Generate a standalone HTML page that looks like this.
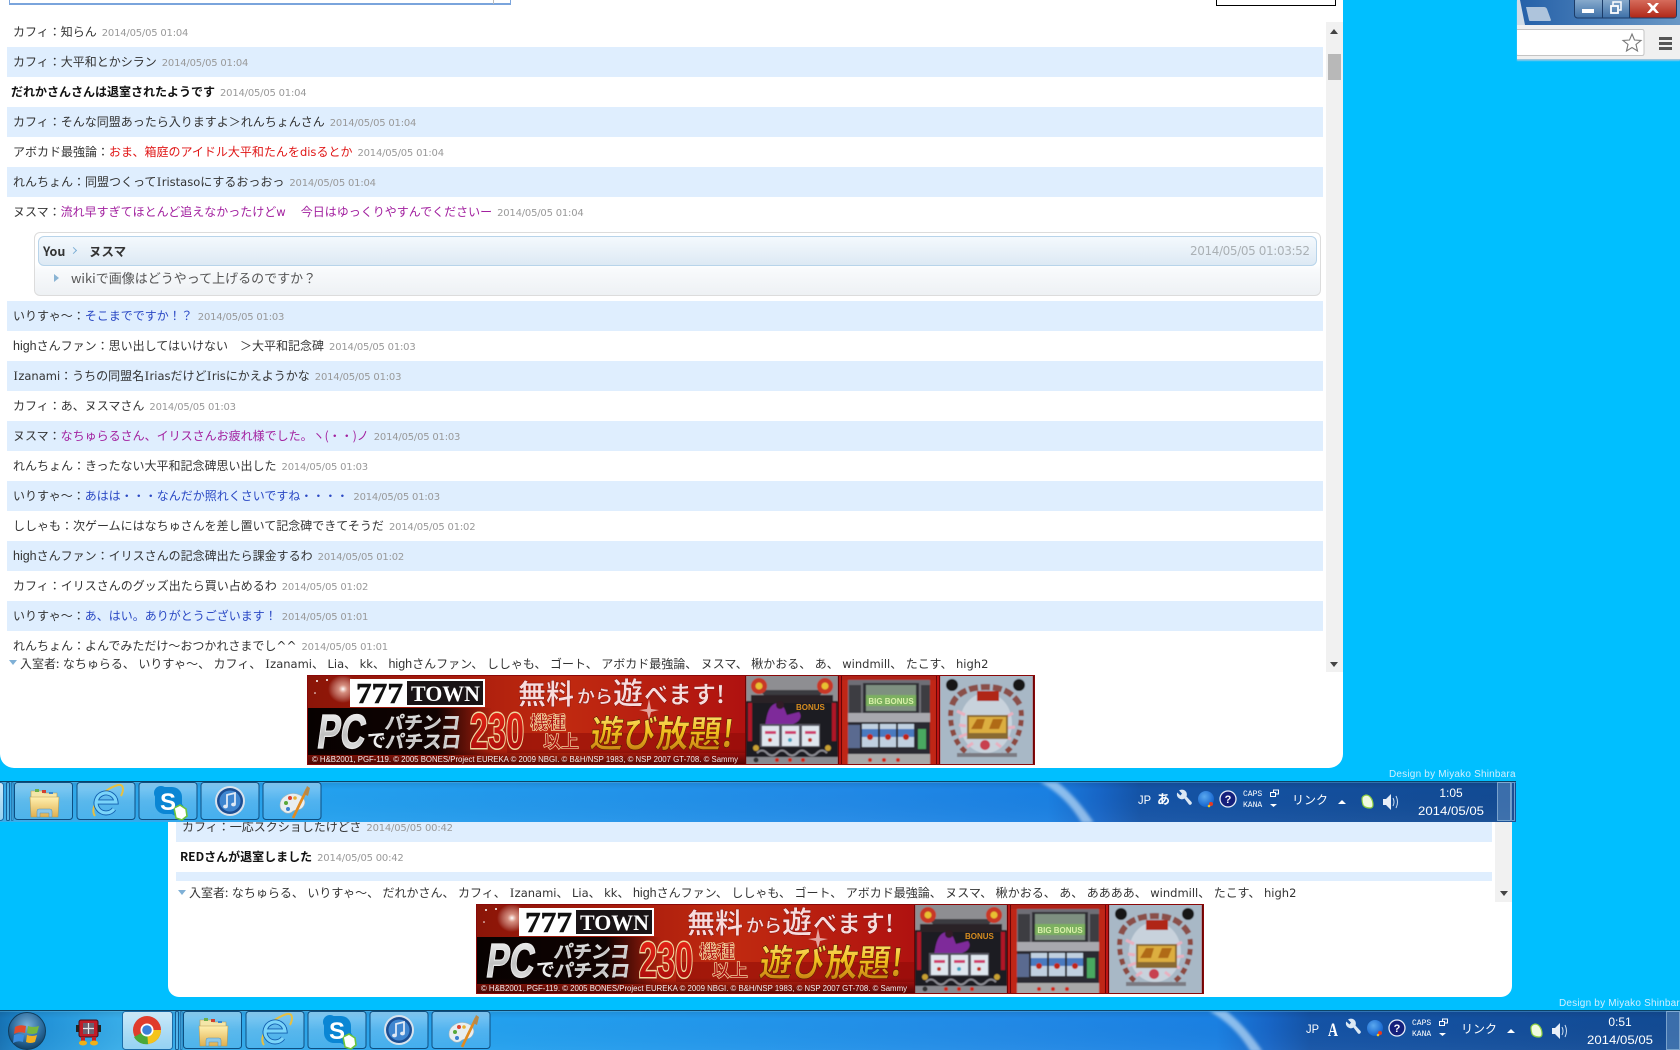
<!DOCTYPE html>
<html lang="ja"><head><meta charset="utf-8"><title>chat</title>
<style>
html,body{margin:0;padding:0;background:#00bfff;width:1680px;height:1050px;overflow:hidden}
body{position:relative;font-family:"Noto Sans CJK JP","Liberation Sans",sans-serif;color:#333}
.w{position:absolute;background:#fff}
.r{position:absolute;height:30px;line-height:30px;font-size:12px;white-space:nowrap;overflow:hidden;color:#333}
.a .r{left:7px;width:1310px;padding-left:6px}
.b .r{left:176px;width:1310px;padding-left:6px}
.o{background:#dfeefe}
.l{font-family:"DejaVu Sans",sans-serif;font-size:11.5px}
.h{font-family:"Liberation Sans",sans-serif;font-size:12.5px}
.i{font-family:"Liberation Serif",serif;font-size:13px;padding:0 .5px}
.c{font-family:"DejaVu Sans",sans-serif;font-size:12px}
.t{font-family:"DejaVu Sans",sans-serif;font-size:10px;letter-spacing:-.2px;color:#999;margin-left:5px}
.sys{font-weight:700;color:#111}
.red{color:#e01616}.pur{color:#a2209f}.blu{color:#2a48c4}
.sb{position:absolute;background:#f1f1f1;width:17px}
.up,.dn{position:absolute;width:0;height:0;border-left:4px solid transparent;border-right:4px solid transparent}
.up{border-bottom:5px solid #444}.dn{border-top:5px solid #444}
.info{position:absolute;height:20px;line-height:20px;font-size:12px;color:#333;white-space:nowrap;word-spacing:.8px}
.tri{position:absolute;width:0;height:0;border-left:4px solid transparent;border-right:4px solid transparent;border-top:5px solid #7fb0d6}
.d{position:absolute;font:10px "Liberation Sans",sans-serif;letter-spacing:.2px;color:#cfefff;white-space:nowrap;overflow:hidden;height:13px;line-height:13px}
svg{position:absolute;display:block;overflow:hidden}
</style></head><body>

<svg width="0" height="0" style="position:absolute">
<defs>
<linearGradient id="tbg" x1="0" x2="1" y1="0" y2="0">
<stop offset="0" stop-color="#1672b4"/><stop offset=".02" stop-color="#1f8fd6"/><stop offset=".07" stop-color="#37ace8"/><stop offset=".3" stop-color="#23a0ee"/><stop offset=".6" stop-color="#2189e6"/><stop offset=".72" stop-color="#1a80e2"/><stop offset=".751" stop-color="#1765c6"/><stop offset=".775" stop-color="#1453a6"/><stop offset="1" stop-color="#124a92"/>
</linearGradient>
<linearGradient id="tvg" x1="0" x2="0" y1="0" y2="1"><stop offset="0" stop-color="#000" stop-opacity=".1"/><stop offset=".2" stop-color="#000" stop-opacity="0"/><stop offset="1" stop-color="#fff" stop-opacity=".04"/></linearGradient>
<linearGradient id="btn" x1="0" x2="0" y1="0" y2="1"><stop offset="0" stop-color="#fff" stop-opacity=".42"/><stop offset=".5" stop-color="#fff" stop-opacity=".2"/><stop offset="1" stop-color="#fff" stop-opacity=".1"/></linearGradient>
<linearGradient id="btna" x1="0" x2="0" y1="0" y2="1"><stop offset="0" stop-color="#fff" stop-opacity=".75"/><stop offset="1" stop-color="#fff" stop-opacity=".45"/></linearGradient>
<linearGradient id="fold" x1="0" x2="0" y1="0" y2="1"><stop offset="0" stop-color="#fff0b0"/><stop offset="1" stop-color="#e0b050"/></linearGradient>
<radialGradient id="orb" cx=".5" cy=".35" r=".7"><stop offset="0" stop-color="#7ab0d8"/><stop offset=".6" stop-color="#2a6a9c"/><stop offset="1" stop-color="#0d3a5c"/></radialGradient>
<radialGradient id="tblue" cx=".4" cy=".35" r=".7"><stop offset="0" stop-color="#5aa8ee"/><stop offset="1" stop-color="#0f5fcc"/></radialGradient>
<linearGradient id="bred" x1="0" x2="1" y1="0" y2="0"><stop offset="0" stop-color="#8a1508"/><stop offset=".2" stop-color="#a81c0c"/><stop offset=".35" stop-color="#c02a10"/><stop offset=".6" stop-color="#b01210"/><stop offset="1" stop-color="#c81818"/></linearGradient>
<linearGradient id="bdark" x1="0" x2="1" y1="0" y2="0"><stop offset="0" stop-color="#000" stop-opacity=".95"/><stop offset=".7" stop-color="#000" stop-opacity=".9"/><stop offset="1" stop-color="#000" stop-opacity="0"/></linearGradient>
<linearGradient id="bbot" x1="0" x2="0" y1="0" y2="1"><stop offset="0" stop-color="#300" stop-opacity="0"/><stop offset="1" stop-color="#300" stop-opacity=".75"/></linearGradient>
<radialGradient id="spark"><stop offset="0" stop-color="#fff"/><stop offset=".3" stop-color="#ffd8c8" stop-opacity=".6"/><stop offset="1" stop-color="#fff" stop-opacity="0"/></radialGradient>
<linearGradient id="silver" x1="0" x2="0" y1="0" y2="1"><stop offset="0" stop-color="#fff"/><stop offset=".55" stop-color="#c0c0c0"/><stop offset="1" stop-color="#f4f4f4"/></linearGradient>
<linearGradient id="gold" x1="0" x2="0" y1="0" y2="1"><stop offset="0" stop-color="#fff2a0"/><stop offset=".5" stop-color="#f2c020"/><stop offset="1" stop-color="#b86a10"/></linearGradient>
<linearGradient id="rd" x1="0" x2="0" y1="0" y2="1"><stop offset="0" stop-color="#f02818"/><stop offset="1" stop-color="#a00808"/></linearGradient>
<filter id="soft" x="-5%" y="-5%" width="110%" height="110%"><feGaussianBlur stdDeviation=".6"/></filter>
<filter id="soft2" x="-30%" y="-10%" width="160%" height="120%"><feGaussianBlur stdDeviation="1.6"/></filter>

<g id="gfolder"><path d="M3 7h11l2 2h13v6H3z" fill="#f4e6a8" stroke="#b89a50" stroke-width=".6"/><rect x="7" y="5" width="4" height="3" fill="#6ab04a"/><rect x="14" y="6" width="4" height="3" fill="#d04030"/><rect x="21" y="8" width="4" height="2" fill="#3a88d0"/><path d="M2 13h29l-1 20H3z" fill="url(#fold)" stroke="#b89a50" stroke-width=".6"/><path d="M9 33v-6q0-2 2-2h11q2 0 2 2v6h-3v-4H12v4z" fill="#8ec8e8" stroke="#5a90b0" stroke-width=".5"/></g>
<g id="gie">
<path d="M5 34C-1 27 10 8 28 3c6-1 6 5 3 11" fill="none" stroke="#e8c040" stroke-width="2"/>
<path d="M7 20H26A10 10 0 1 0 24 27" fill="none" stroke="#1260b0" stroke-width="5"/>
<path d="M7 20H26A10 10 0 1 0 24 27" fill="none" stroke="#7ad4fa" stroke-width="3.200"/>
</g>
<g id="gsky"><rect x="2" y="3" width="27" height="27" rx="10" fill="#0a86d4"/><circle cx="8" cy="9" r="7" fill="#0a86d4"/><circle cx="24" cy="25" r="7" fill="#0a86d4"/><path d="M21 24l6-3 6 4 1 7-5 4-6-2z" fill="#fff" stroke="#6cc43c" stroke-width="1.600"/></g>
<g id="gitu"><circle cx="15" cy="15" r="15" fill="#d8e2ec"/><circle cx="15" cy="15" r="13" fill="#1b4d92"/><circle cx="15" cy="15" r="10.500" fill="#3f86d0"/><path d="M12 20V9l8-2v11" fill="none" stroke="#dfe9f5" stroke-width="1.800"/><ellipse cx="10.500" cy="20.500" rx="2.400" ry="1.900" fill="#dfe9f5"/><ellipse cx="18.500" cy="18.500" rx="2.400" ry="1.900" fill="#dfe9f5"/></g>
<g id="gpai"><path d="M3 22C3 14 12 9 20 11c7 2 10 8 6 13-3 4-7 2-10 4-3 3-7 3-10 0-2-1-3-3-3-6z" fill="#e8eef0" stroke="#a8b4b8" stroke-width=".6"/><circle cx="9" cy="20" r="2" fill="#58a838"/><circle cx="13" cy="15" r="2" fill="#e04030"/><circle cx="11" cy="26" r="2" fill="#3a80d0"/><circle cx="18" cy="15" r="1.800" fill="#e8b030"/><path d="M16 35L30 6" stroke="#e08a20" stroke-width="2.600"/><path d="M27 11l3-8 3 2-2 8z" fill="#b88848"/></g>
<g id="gbar">
<rect width="1690" height="41" fill="url(#tbg)"/><rect width="1690" height="41" fill="url(#tvg)"/>
<path d="M1209 1q26 14 42 41h12Q1244 14 1226 1z" fill="#d8ecfb" opacity=".6" filter="url(#soft2)"/>
<rect width="1690" height="1" fill="#0a4468"/><rect y="1" width="1690" height="1" fill="#6cc4ee" opacity=".35"/>
<circle cx="27" cy="21" r="18.500" fill="url(#orb)" stroke="#103c5c"/>
<path d="M15 17q5-3 11-1l-1 7q-6-2-11 1z" fill="#e24a2c"/><path d="M28 16q5 2 11 0l-2 7q-5 2-10 0z" fill="#78b83c"/><path d="M14 25q5-2 10 0l-1 7q-5-2-10 1z" fill="#3a8ce0"/><path d="M27 25q5 2 10 0l-2 7q-5 2-9 0z" fill="#f2b020"/>
<rect x="79" y="10" width="19" height="17" rx="2" fill="#c01c28" stroke="#401018"/><rect x="83" y="13" width="11" height="11" fill="#6a6070"/><path d="M88.500 13v11M83 18.500h11" stroke="#e8e4e8" stroke-width="1.200"/><rect x="76" y="15" width="3" height="7" fill="#222"/><rect x="98" y="15" width="3" height="7" fill="#222"/><rect x="81" y="27" width="4" height="5" fill="#c02028"/><rect x="92" y="27" width="4" height="5" fill="#c02028"/><ellipse cx="83" cy="33" rx="4" ry="2.500" fill="#f0b018"/><ellipse cx="94" cy="33" rx="4" ry="2.500" fill="#f0b018"/>
<rect x="122.500" y="1.500" width="50" height="38" rx="3" fill="url(#btna)" stroke="#1c6ca8"/>
<circle cx="147" cy="20" r="14" fill="#e03c2c"/><path d="M147 20L134 27a14 14 0 0 0 15 7z" fill="#4aa838"/><path d="M147 20h14a14 14 0 0 1-13 14z" fill="#f4c41c"/><circle cx="147" cy="20" r="6.500" fill="#fff"/><circle cx="147" cy="20" r="4.800" fill="#3a80d8"/>
<rect x="175.500" y="1.500" width="3" height="38" rx="1" fill="#fff" fill-opacity=".15" stroke="#145c94"/><rect x="180.500" y="1.500" width="1.500" height="38" fill="#fff" fill-opacity=".15" stroke="#145c94" stroke-width=".6"/>
<g fill="url(#btn)" stroke="#0e4f82"><rect x="183.500" y="1.500" width="58" height="37" rx="3"/><rect x="246" y="1.500" width="58" height="37" rx="3"/><rect x="308" y="1.500" width="58" height="37" rx="3"/><rect x="370" y="1.500" width="58" height="37" rx="3"/><rect x="432" y="1.500" width="58" height="37" rx="3"/></g>
<use href="#gfolder" x="197" y="3"/><use href="#gie" x="259" y="1"/><use href="#gsky" x="322" y="3"/><use href="#gitu" x="384" y="5"/><use href="#gpai" x="446" y="2"/>
<path d="M1348 9.500L1351 12.500L1349.500 14.500L1346.200 11.500A5 5 0 0 0 1353.500 17.500L1358 23.500A1.800 1.800 0 0 0 1360.500 21L1355.500 15.500A5 5 0 0 0 1348 9.500Z" fill="#dbe8f4"/>
<circle cx="1375" cy="18" r="8" fill="url(#tblue)"/><circle cx="1380" cy="23" r="2" fill="#e83820"/><circle cx="1378" cy="25" r="1.300" fill="#f2c820"/>
<circle cx="1397" cy="18" r="8" fill="#14207c" stroke="#e8eef8" stroke-width="1.300"/>
<path d="M1439.500 15.500v-4h5v4zM1442.500 11.500v-2.500h5v4h-3" fill="none" stroke="#fff" stroke-width="1"/>
<path d="M1439 23h7l-3.500 3z" fill="#fff"/><path d="M1507 23h8l-4-4z" fill="#fff"/>
<path d="M1531 18q0-3 4-4 3 0 5 3 2 3 2 7 0 3-3 3-5 0-7-3-1-3-1-6z" fill="#f0fbe0" stroke="#8ed040" stroke-width="1.200"/>
<path d="M1552 18h3l5-5v16l-5-5h-3z" fill="#e8eff8"/><path d="M1562 17q2 4 0 8M1565 15q3 6 0 12" fill="none" stroke="#cfe0f2" stroke-width="1"/>
<rect x="1666.500" y="1.500" width="13" height="38" fill="#5d8cc0" fill-opacity=".55" stroke="#9cc0e0" stroke-opacity=".7"/><rect x="1680.500" y="1.500" width="3" height="38" fill="#1a4e94" stroke="#6c9ccc"/>
</g>

<g id="gban">
<rect width="728" height="90" fill="url(#bred)"/>
<rect x="0" y="33" width="185" height="47" fill="url(#bdark)"/>
<rect x="200" y="58" width="240" height="20" fill="#8a0a06" opacity=".5"/>
<rect y="74" width="440" height="16" fill="url(#bbot)"/>
<ellipse cx="36" cy="14" rx="15" ry="14" fill="url(#spark)"/>
<circle cx="10" cy="6" r="1" fill="#fff"/><circle cx="20" cy="5" r="1" fill="#fff"/><circle cx="8" cy="18" r=".8" fill="#fff"/>
<path d="M340 34l2-10 2 10 8 1-8 2-2 8-2-8-8-2z" fill="#fff" opacity=".6"/>
<g filter="url(#soft)">
<rect x="439" width="92" height="90" fill="#1e1a22"/>
<path d="M439 0h92v26H439z" fill="#8e8e92"/><path d="M452 15h66l-8 8h-50z" fill="#3a3a40"/>
<rect x="444" y="20" width="82" height="8" fill="#2a2228"/>
<circle cx="452" cy="11" r="8" fill="#c83828"/><circle cx="452" cy="11" r="3.500" fill="#e8c030"/><circle cx="518" cy="11" r="8" fill="#c83828"/><circle cx="518" cy="11" r="3.500" fill="#e8c030"/>
<rect x="441" y="28" width="4" height="38" fill="#b01828"/><rect x="525" y="28" width="4" height="38" fill="#b01828"/>
<path d="M458 52c2-14 4-22 12-24 8 2 8 8 10 12l12-3c4 5 0 10-6 12h-14z" fill="#7e2a9a"/><circle cx="473" cy="30" r="4" fill="#301c28"/>
<rect x="453" y="49" width="60" height="23" fill="#555560"/>
<rect x="455" y="51" width="17" height="20" fill="#dfe6ee"/><rect x="475" y="51" width="17" height="20" fill="#dfe6ee"/><rect x="495" y="51" width="17" height="20" fill="#dfe6ee"/>
<rect x="458" y="56" width="11" height="3" fill="#d04070"/><rect x="478" y="56" width="11" height="3" fill="#d04070"/><rect x="498" y="56" width="11" height="3" fill="#d04070"/>
<circle cx="463" cy="65" r="2" fill="#c03020"/><circle cx="483" cy="65" r="2" fill="#40a0c0"/><circle cx="503" cy="65" r="2" fill="#c03020"/>
<path d="M450 78q5-5 10 0t10 0 10 0 10 0 10 0 10 0 10 0" fill="none" stroke="#888890" stroke-width="2"/>
<circle cx="449" cy="73" r="3" fill="#c8a030"/><circle cx="521" cy="73" r="3" fill="#c8a030"/>
<rect x="439" y="82" width="92" height="8" fill="#8a8a90"/><circle cx="470" cy="85" r="2" fill="#d02818"/><circle cx="483" cy="85" r="2" fill="#d02818"/><circle cx="496" cy="85" r="2" fill="#d02818"/><circle cx="449" cy="85" r="2.500" fill="#333"/>
<rect x="535" width="94" height="90" fill="#6e6e76"/>
<rect x="535" width="6" height="90" fill="#c02818"/><rect x="623" width="6" height="90" fill="#c02818"/><rect x="535" width="94" height="5" fill="#b02018"/>
<rect x="556" y="8" width="56" height="30" fill="#2e2e34"/><rect x="559" y="10" width="50" height="26" fill="#7e9080"/><rect x="559" y="20" width="50" height="11" fill="#7cb060"/>
<rect x="542" y="10" width="12" height="28" fill="#3c3c42"/><rect x="614" y="10" width="9" height="28" fill="#3c3c42"/>
<rect x="541" y="38" width="82" height="9" fill="#a8a8ae"/>
<rect x="541" y="47" width="82" height="32" fill="#2a2a30"/>
<rect x="541" y="50" width="12" height="23" fill="#5a6a90"/>
<rect x="555" y="49" width="16" height="23" fill="#c0d0e0"/><rect x="573" y="49" width="16" height="23" fill="#c0d0e0"/><rect x="591" y="49" width="16" height="23" fill="#c0d0e0"/>
<rect x="555" y="54" width="16" height="8" fill="#4a7ac0"/><rect x="573" y="54" width="16" height="8" fill="#4a7ac0"/><rect x="591" y="54" width="16" height="8" fill="#4a7ac0"/>
<circle cx="563" cy="62" r="3" fill="#c02818"/><circle cx="581" cy="62" r="3" fill="#c02818"/><circle cx="599" cy="62" r="3" fill="#c02818"/>
<rect x="611" y="54" width="8" height="20" fill="#4aa860"/>
<rect x="541" y="79" width="82" height="11" fill="#a8a8a8"/><circle cx="563" cy="85" r="2" fill="#d02818"/><circle cx="577" cy="85" r="2" fill="#d02818"/><circle cx="591" cy="85" r="2" fill="#d02818"/>
<rect x="633" width="93" height="90" fill="#a8b8c6"/>
<circle cx="645" cy="10" r="6" fill="#181818"/><circle cx="712" cy="10" r="6" fill="#181818"/>
<path d="M645 30c5-14 20-18 34-18s26 4 34 18" fill="none" stroke="#8a5048" stroke-width="6" stroke-dasharray="9 3"/>
<path d="M644 35c-2 16 4 36 18 44M714 35c2 16-4 36-18 44" fill="none" stroke="#8c4a40" stroke-width="5" stroke-dasharray="6 4"/>
<ellipse cx="679" cy="48" rx="26" ry="30" fill="#c8d2dc"/>
<path d="M650 36l8 4M652 50l7 1M652 62l8-3M706 38l-7 4M708 52l-8 1M704 64l-8-3M660 72l6-4M694 72l-5-4" stroke="#e8b0c0" stroke-width="3"/>
<rect x="670" y="16" width="22" height="10" fill="#b02818"/>
<rect x="660" y="40" width="41" height="24" fill="#8a6a30"/><rect x="662" y="42" width="37" height="16" fill="#dcae40"/><path d="M664 54l6-10h8l-3 10zM682 54l4-10h10l-4 10z" fill="#b06a18"/>
<circle cx="678" cy="70" r="5" fill="#c84050"/>
<rect x="650" y="78" width="60" height="4" fill="#7a7a82"/>
</g>
<rect x="438.500" y=".5" width="93" height="89" fill="none" stroke="#6a0606"/><rect x="534.500" y=".5" width="95" height="89" fill="none" stroke="#6a0606"/><rect x="632.500" y=".5" width="94" height="89" fill="none" stroke="#6a0606"/>
<rect x=".5" y=".5" width="727" height="89" fill="none" stroke="#8a0808"/>
<rect x="43" y="4" width="135" height="28" fill="#fff"/><rect x="100" y="6" width="76" height="24" fill="#1a1416"/>
</g>
</defs>
</svg>

<div class="w b" style="left:168px;top:822px;width:1344px;height:175px;border-radius:0 0 11px 11px"></div>
<div class="b" style="position:absolute;left:0;top:0">
<div class="r o" style="top:812px">カフィ&#xFF1A;一応スクショしたけどさ<span class="t">2014/05/05 00:42</span></div>
<div class="r" style="top:842px;left:174px"><span class="sys">REDさんが退室しました</span><span class="t">2014/05/05 00:42</span></div>
<div class="r o" style="top:872px;height:9px"></div>
</div>
<div class="sb" style="left:1495px;top:822px;height:80px"></div>
<div class="dn" style="left:1500px;top:891px"></div>
<div class="tri" style="left:178px;top:890px"></div>
<div class="info" style="left:189px;top:883px">入室者: なちゅらる、 いりすゃ&#xFF5E;、 だれかさん、 カフィ、 <span class="l"><span class="i">I</span>zanami</span>、 <span class="l">Lia</span>、 <span class="l">kk</span>、 <span class="h">high</span>さんファン、 ししゃも、 ゴート、 アボカド最強論、 ヌスマ、 楸かおる、 あ、 ああああ、 <span class="l">windmill</span>、 たこす、 <span class="l">high2</span></div>

<svg style="left:476px;top:904px" width="728" height="90" viewBox="0 0 728 90">
<use href="#gban"/>
<text x="49" y="28" font-family="Liberation Serif" font-weight="700" font-size="28" fill="#111" stroke="#111" stroke-width=".5" textLength="47" lengthAdjust="spacingAndGlyphs">777</text>
<text x="104" y="26" font-family="Liberation Serif" font-weight="700" font-size="22" fill="#fff" textLength="69" lengthAdjust="spacingAndGlyphs">TOWN</text>
<g transform="skewX(-8)"><text x="19" y="73" font-family="Liberation Sans" font-weight="700" font-size="48" fill="url(#silver)" stroke="#e8e8e8" stroke-width="1.200" textLength="48" lengthAdjust="spacingAndGlyphs">PC</text></g>
<text x="60" y="72" font-family="Noto Sans CJK JP" font-weight="700" font-size="19" fill="#eee">で</text>
<g transform="skewX(-8)"><text x="85" y="54" font-family="Noto Sans CJK JP" font-weight="700" font-size="18" fill="url(#silver)" stroke="#ddd" stroke-width=".4" textLength="75" lengthAdjust="spacingAndGlyphs">パチンコ</text>
<text x="88" y="73" font-family="Noto Sans CJK JP" font-weight="700" font-size="18" fill="url(#silver)" stroke="#ddd" stroke-width=".4" textLength="75" lengthAdjust="spacingAndGlyphs">パチスロ</text></g>
<text x="163" y="73" font-family="Liberation Sans" font-weight="700" font-size="50" fill="url(#rd)" stroke="#f0d8a0" stroke-width="3" paint-order="stroke" textLength="54" lengthAdjust="spacingAndGlyphs">230</text>
<text x="223" y="54" font-family="Noto Sans CJK JP" font-weight="700" font-size="18" fill="#b01010" stroke="#f2d8a0" stroke-width=".7">機種</text>
<text x="236" y="73" font-family="Noto Sans CJK JP" font-weight="700" font-size="18" fill="#b01010" stroke="#f2d8a0" stroke-width=".7">以上</text>
<g transform="skewX(-6)"><text x="290" y="72" font-family="Noto Sans CJK JP" font-weight="700" font-size="37" fill="url(#gold)" stroke="#5a1c00" stroke-width=".6" textLength="143" lengthAdjust="spacingAndGlyphs">遊び放題!</text></g>
<g font-family="Noto Sans CJK JP" font-weight="700" fill="#f8dcdc" stroke="#700" stroke-width=".4">
<text x="211" y="29" font-size="28">無料</text><text x="270" y="28" font-size="18">から</text><text x="306" y="29" font-size="30">遊</text><text x="337" y="28" font-size="24">べます</text><text x="409" y="28" font-size="24">!</text></g>
<text x="5" y="87" font-family="Liberation Sans" font-size="8" fill="#f4f0f0" textLength="426" lengthAdjust="spacingAndGlyphs">© H&amp;B2001, PGF-119. © 2005 BONES/Project EUREKA © 2009 NBGI. © B&amp;H/NSP 1983, © NSP 2007 GT-708. © Sammy</text>
<text x="489" y="35" font-family="Liberation Sans" font-weight="700" font-size="8" fill="#d88c20">BONUS</text>
<text x="584" y="29" text-anchor="middle" font-family="Liberation Sans" font-weight="700" font-size="8" fill="#d8f0a8">BIG BONUS</text>
</svg>

<div class="d" style="left:1559px;top:997px;width:121px">Design by Miyako Shinbara</div>

<svg style="left:0;top:1010px" width="1680" height="40" viewBox="0 0 1680 40">
<use href="#gbar"/>
<g fill="#fff">
<text x="329" y="29" font-family="Liberation Sans" font-weight="700" font-size="24">S</text>
<text x="1306" y="23" font-family="Liberation Sans" font-size="12" textLength="13" lengthAdjust="spacingAndGlyphs">JP</text>
<text x="1328" y="26" font-family="Liberation Serif" font-weight="700" font-size="19" textLength="10" lengthAdjust="spacingAndGlyphs">A</text>
<text x="1397" y="22" font-family="Liberation Sans" font-weight="700" font-size="11" text-anchor="middle">?</text>
<text x="1412" y="15" font-family="Liberation Mono" font-size="8">CAPS</text>
<text x="1412" y="26" font-family="Liberation Mono" font-size="8">KANA</text>
<text x="1461" y="23" font-family="Noto Sans CJK JP" font-size="12">リンク</text>
<text x="1620" y="16" font-family="Liberation Sans" font-size="12" text-anchor="middle">0:51</text>
<text x="1587" y="34" font-family="Liberation Sans" font-size="12" textLength="66" lengthAdjust="spacingAndGlyphs">2014/05/05</text>
</g>
</svg>

<div class="w a" style="left:0;top:0;width:1343px;height:768px;border-radius:0 0 14px 14px"></div>
<div style="position:absolute;left:9px;top:-3px;width:500px;height:6px;border:1px solid #7aa4dc;border-width:0 1px 2px 1px"></div>
<div style="position:absolute;left:493px;top:0;width:1px;height:4px;background:#bbb"></div>
<div style="position:absolute;left:1216px;top:-6px;width:118px;height:10px;border:1px solid #000;background:#fff"></div>

<div class="a">
<div class="r" style="top:17px">カフィ&#xFF1A;知らん<span class="t">2014/05/05 01:04</span></div>
<div class="r o" style="top:47px">カフィ&#xFF1A;大平和とかシラン<span class="t">2014/05/05 01:04</span></div>
<div class="r" style="top:77px;padding-left:4px"><span class="sys">だれかさんさんは退室されたようです</span><span class="t">2014/05/05 01:04</span></div>
<div class="r o" style="top:107px">カフィ&#xFF1A;そんな同盟あったら入りますよ&#xFF1E;れんちょんさん<span class="t">2014/05/05 01:04</span></div>
<div class="r" style="top:137px">アボカド最強論&#xFF1A;<span class="red">おま、箱庭のアイドル大平和たんを<span class="l">dis</span>るとか</span><span class="t">2014/05/05 01:04</span></div>
<div class="r o" style="top:167px">れんちょん&#xFF1A;同盟つくって<span class="l"><span class="i">I</span>ristaso</span>にするおっおっ<span class="t">2014/05/05 01:04</span></div>
<div class="r" style="top:197px">ヌスマ&#xFF1A;<span class="pur">流れ早すぎてほとんど追えなかったけど<span class="l" style="padding-right:3px">w</span>&#x3000;今日はゆっくりやすんでくださいー</span><span class="t">2014/05/05 01:04</span></div>

<div style="position:absolute;left:34px;top:232px;width:1285px;height:62px;border:1px solid #dcdcdc;border-radius:6px;background:linear-gradient(#fff 50%,#f8fafc 60%,#eef1f4)"></div>
<div style="position:absolute;left:38px;top:236px;width:1277px;height:28px;border:1px solid #b8d4ea;border-radius:6px;background:linear-gradient(#f4f9fd,#dde9f4)"></div>
<div style="position:absolute;left:43px;top:241px;font-size:12.500px;font-weight:700;line-height:20px;color:#333">You</div>
<div style="position:absolute;left:71px;top:248px;width:4px;height:4px;border:solid #7fb0d6;border-width:1.500px 1.500px 0 0;transform:rotate(45deg)"></div>
<div style="position:absolute;left:89px;top:241px;font-size:12.500px;font-weight:700;line-height:20px;color:#333">ヌスマ</div>
<div style="position:absolute;left:1190px;top:241px;font:12px/20px 'DejaVu Sans',sans-serif;letter-spacing:-.38px;color:#aab0b4;white-space:nowrap">2014/05/05 01:03:52</div>
<div style="position:absolute;left:54px;top:274px;width:0;height:0;border-top:4px solid transparent;border-bottom:4px solid transparent;border-left:5px solid #8ab4d4"></div>
<div style="position:absolute;left:71px;top:268px;font-size:13px;line-height:20px;color:#555;white-space:nowrap">wikiで画像はどうやって上げるのですか&#xFF1F;</div>

<div class="r o" style="top:301px">いりすゃ&#xFF5E;&#xFF1A;<span class="blu">そこまでですか&#xFF01;&#xFF1F;</span><span class="t">2014/05/05 01:03</span></div>
<div class="r" style="top:331px"><span class="h">high</span>さんファン&#xFF1A;思い出してはいけない&#x3000;&#xFF1E;大平和記念碑<span class="t">2014/05/05 01:03</span></div>
<div class="r o" style="top:361px"><span class="l"><span class="i">I</span>zanami</span>&#xFF1A;うちの同盟名<span class="l"><span class="i">I</span>rias</span>だけど<span class="l"><span class="i">I</span>ris</span>にかえようかな<span class="t">2014/05/05 01:03</span></div>
<div class="r" style="top:391px">カフィ&#xFF1A;あ、ヌスマさん<span class="t">2014/05/05 01:03</span></div>
<div class="r o" style="top:421px">ヌスマ&#xFF1A;<span class="pur">なちゅらるさん、イリスさんお疲れ様でした。ヽ(・・)ノ</span><span class="t">2014/05/05 01:03</span></div>
<div class="r" style="top:451px">れんちょん&#xFF1A;きったない大平和記念碑思い出した<span class="t">2014/05/05 01:03</span></div>
<div class="r o" style="top:481px">いりすゃ&#xFF5E;&#xFF1A;<span class="blu">あはは・・・なんだか照れくさいですね・・・・</span><span class="t">2014/05/05 01:03</span></div>
<div class="r" style="top:511px">ししゃも&#xFF1A;次ゲームにはなちゅさんを差し置いて記念碑できてそうだ<span class="t">2014/05/05 01:02</span></div>
<div class="r o" style="top:541px"><span class="h">high</span>さんファン&#xFF1A;イリスさんの記念碑出たら課金するわ<span class="t">2014/05/05 01:02</span></div>
<div class="r" style="top:571px">カフィ&#xFF1A;イリスさんのグッズ出たら買い占めるわ<span class="t">2014/05/05 01:02</span></div>
<div class="r o" style="top:601px">いりすゃ&#xFF5E;&#xFF1A;<span class="blu">あ、はい。ありがとうございます&#xFF01;</span><span class="t">2014/05/05 01:01</span></div>
<div class="r" style="top:631px">れんちょん&#xFF1A;よんでみただけ&#xFF5E;おつかれさまでし<span class="c">^^</span><span class="t">2014/05/05 01:01</span></div>
</div>

<div class="sb" style="left:1326px;top:22px;height:650px"></div>
<div class="up" style="left:1330px;top:29px"></div>
<div style="position:absolute;left:1328px;top:54px;width:13px;height:26px;background:#b8b8b8"></div>
<div class="dn" style="left:1330px;top:662px"></div>
<div class="tri" style="left:9px;top:660px"></div>
<div class="info" style="left:20px;top:654px">入室者: なちゅらる、 いりすゃ&#xFF5E;、 カフィ、 <span class="l"><span class="i">I</span>zanami</span>、 <span class="l">Lia</span>、 <span class="l">kk</span>、 <span class="h">high</span>さんファン、 ししゃも、 ゴート、 アボカド最強論、 ヌスマ、 楸かおる、 あ、 <span class="l">windmill</span>、 たこす、 <span class="l">high2</span></div>

<svg style="left:307px;top:675px" width="728" height="90" viewBox="0 0 728 90">
<use href="#gban"/>
<text x="49" y="28" font-family="Liberation Serif" font-weight="700" font-size="28" fill="#111" stroke="#111" stroke-width=".5" textLength="47" lengthAdjust="spacingAndGlyphs">777</text>
<text x="104" y="26" font-family="Liberation Serif" font-weight="700" font-size="22" fill="#fff" textLength="69" lengthAdjust="spacingAndGlyphs">TOWN</text>
<g transform="skewX(-8)"><text x="19" y="73" font-family="Liberation Sans" font-weight="700" font-size="48" fill="url(#silver)" stroke="#e8e8e8" stroke-width="1.200" textLength="48" lengthAdjust="spacingAndGlyphs">PC</text></g>
<text x="60" y="72" font-family="Noto Sans CJK JP" font-weight="700" font-size="19" fill="#eee">で</text>
<g transform="skewX(-8)"><text x="85" y="54" font-family="Noto Sans CJK JP" font-weight="700" font-size="18" fill="url(#silver)" stroke="#ddd" stroke-width=".4" textLength="75" lengthAdjust="spacingAndGlyphs">パチンコ</text>
<text x="88" y="73" font-family="Noto Sans CJK JP" font-weight="700" font-size="18" fill="url(#silver)" stroke="#ddd" stroke-width=".4" textLength="75" lengthAdjust="spacingAndGlyphs">パチスロ</text></g>
<text x="163" y="73" font-family="Liberation Sans" font-weight="700" font-size="50" fill="url(#rd)" stroke="#f0d8a0" stroke-width="3" paint-order="stroke" textLength="54" lengthAdjust="spacingAndGlyphs">230</text>
<text x="223" y="54" font-family="Noto Sans CJK JP" font-weight="700" font-size="18" fill="#b01010" stroke="#f2d8a0" stroke-width=".7">機種</text>
<text x="236" y="73" font-family="Noto Sans CJK JP" font-weight="700" font-size="18" fill="#b01010" stroke="#f2d8a0" stroke-width=".7">以上</text>
<g transform="skewX(-6)"><text x="290" y="72" font-family="Noto Sans CJK JP" font-weight="700" font-size="37" fill="url(#gold)" stroke="#5a1c00" stroke-width=".6" textLength="143" lengthAdjust="spacingAndGlyphs">遊び放題!</text></g>
<g font-family="Noto Sans CJK JP" font-weight="700" fill="#f8dcdc" stroke="#700" stroke-width=".4">
<text x="211" y="29" font-size="28">無料</text><text x="270" y="28" font-size="18">から</text><text x="306" y="29" font-size="30">遊</text><text x="337" y="28" font-size="24">べます</text><text x="409" y="28" font-size="24">!</text></g>
<text x="5" y="87" font-family="Liberation Sans" font-size="8" fill="#f4f0f0" textLength="426" lengthAdjust="spacingAndGlyphs">© H&amp;B2001, PGF-119. © 2005 BONES/Project EUREKA © 2009 NBGI. © B&amp;H/NSP 1983, © NSP 2007 GT-708. © Sammy</text>
<text x="489" y="35" font-family="Liberation Sans" font-weight="700" font-size="8" fill="#d88c20">BONUS</text>
<text x="584" y="29" text-anchor="middle" font-family="Liberation Sans" font-weight="700" font-size="8" fill="#d8f0a8">BIG BONUS</text>
</svg>

<div class="d" style="left:1389px;top:768px;width:127px">Design by Miyako Shinbara</div>

<svg style="left:0;top:781px" width="1516" height="41" viewBox="169 0 1516 41">
<use href="#gbar"/>
<g fill="#fff">
<text x="329" y="29" font-family="Liberation Sans" font-weight="700" font-size="24">S</text>
<text x="1307" y="23" font-family="Liberation Sans" font-size="12" textLength="13" lengthAdjust="spacingAndGlyphs">JP</text>
<text x="1326" y="23" font-family="Noto Sans CJK JP" font-weight="700" font-size="13">あ</text>
<text x="1397" y="22" font-family="Liberation Sans" font-weight="700" font-size="11" text-anchor="middle">?</text>
<text x="1412" y="15" font-family="Liberation Mono" font-size="8">CAPS</text>
<text x="1412" y="26" font-family="Liberation Mono" font-size="8">KANA</text>
<text x="1461" y="23" font-family="Noto Sans CJK JP" font-size="12">リンク</text>
<text x="1620" y="16" font-family="Liberation Sans" font-size="12" text-anchor="middle">1:05</text>
<text x="1587" y="34" font-family="Liberation Sans" font-size="12" textLength="66" lengthAdjust="spacingAndGlyphs">2014/05/05</text>
</g>
</svg>

<div style="position:absolute;left:1517px;top:0;width:163px;height:60px;background:#f0f0f0;border-bottom:1px solid #9cc4dc;box-sizing:border-box;box-shadow:0 1px 1px #7fc8e8"></div>
<svg style="left:1517px;top:0" width="163" height="60" viewBox="0 0 163 60">
<defs><linearGradient id="ctop" x1="0" x2="1" y1="0" y2="0"><stop offset="0" stop-color="#2460a8"/><stop offset="1" stop-color="#6a98c6"/></linearGradient><linearGradient id="cls" x1="0" x2="0" y1="0" y2="1"><stop offset="0" stop-color="#d87060"/><stop offset="1" stop-color="#b02818"/></linearGradient><linearGradient id="mn" x1="0" x2="0" y1="0" y2="1"><stop offset="0" stop-color="#8fb0d0"/><stop offset="1" stop-color="#3d70a8"/></linearGradient></defs>
<rect width="163" height="25" fill="url(#ctop)"/>
<path d="M0 0h3l5 25H0z" fill="#cfdce8"/>
<path d="M9 7h18q2 0 3 2l4 11q0 1-2 1H13q-1 0-1-1z" fill="#aec4dc"/>
<rect x="57.500" y="-2" width="102" height="20" rx="3" fill="url(#mn)" stroke="#1c3c68"/>
<rect x="113" y="-1" width="46" height="18.500" rx="2" fill="url(#cls)"/>
<path d="M85.500 0v18M112.500 0v18" stroke="#1c3c68"/>
<rect x="65" y="9" width="12" height="4" fill="#fff"/>
<rect x="94" y="6" width="7" height="7" fill="none" stroke="#fff" stroke-width="1.800"/><path d="M96 5V2h8v8h-2" fill="none" stroke="#fff" stroke-width="1.500"/>
<path d="M130 3l3 0 3 3 3-3 3 0-4 5 4 5-3 0-3-3-3 3-3 0 4-5z" fill="#fff"/>
<rect y="29" width="127.500" height="26" rx="2" fill="#fff"/><path d="M0 29.500h125q2 0 2 2v22q0 2-2 2H0" fill="none" stroke="#c4c4c4"/>
<path d="M115 34l2.500 6 6.500.5-5 4 1.500 6.500-5.500-3.500-5.500 3.500 1.500-6.500-5-4 6.500-.5z" fill="none" stroke="#777" stroke-width="1.100"/>
<path d="M142 37h13v3h-13zM142 42h13v3h-13zM142 47h13v3h-13z" fill="#555"/>
</svg>

</body></html>
